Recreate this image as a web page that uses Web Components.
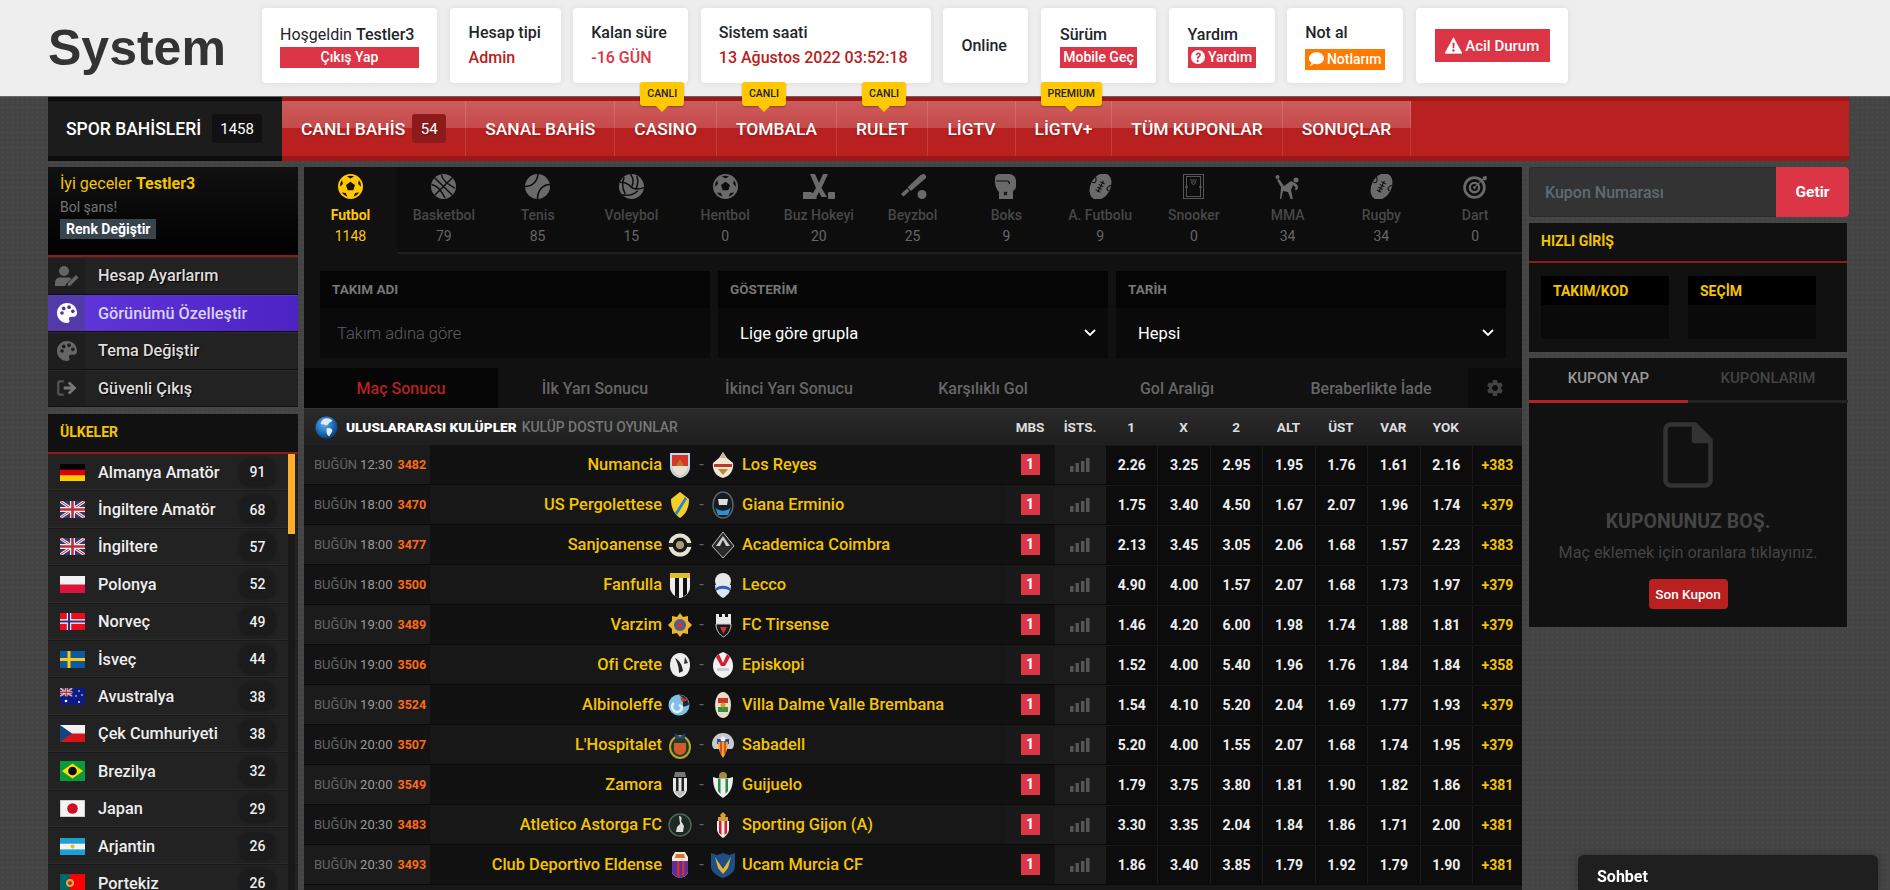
<!DOCTYPE html>
<html lang="tr"><head><meta charset="utf-8"><title>System</title>
<style>
html,body{margin:0;height:890px;overflow:hidden}
body{font-family:Roboto,"Liberation Sans",sans-serif;background-color:#444;background-image:radial-gradient(#494949 1px,transparent 1.2px);background-size:5px 5px}
</style></head><body>
<site-header></site-header>
<top-nav></top-nav>
<page-body></page-body>
<chat-bar></chat-bar>
<script>
class Base extends HTMLElement{
  constructor(){super();this.attachShadow({mode:'open'})}
  connectedCallback(){this.shadowRoot.innerHTML=`<style>:host{box-sizing:border-box}*{box-sizing:border-box}${this.css()}</style>${this.html()}`}
  css(){return ''}
  html(){return '<slot></slot>'}
}
const def=(n,c)=>customElements.define(n,c);
/* ---------- icons ---------- */
const I={
 q:`<svg width="14" height="14" viewBox="0 0 24 24"><circle cx="12" cy="12" r="12" fill="#fff"/><path d="M8 9c0-6 9-6 9-.5 0 3.500-4 3.500-4 6.500h-3c0-4.500 4-4.500 4-6.500 0-2-3-2-3 .5z" fill="#dc3545"/><circle cx="11.500" cy="18.500" r="2" fill="#dc3545"/></svg>`,
 c:`<svg width="15" height="14" viewBox="0 0 24 22"><path d="M12 0c6.600 0 12 4.300 12 9.700s-5.400 9.700-12 9.700c-1.500 0-3-.2-4.300-.7C6 20.300 3.500 22 1 22c1.300-1.300 2.700-3.500 2.900-5.400C1.500 14.900 0 12.400 0 9.700 0 4.300 5.400 0 12 0z" fill="#fff"/></svg>`,
 w:`<svg width="17" height="17" viewBox="0 0 24 22"><path d="M12 0l12 22H0z" fill="#fff" stroke="#fff" stroke-linejoin="round"/><path d="M10.500 7h3l-.4 8h-2.200z" fill="#dc3545"/><circle cx="12" cy="18" r="1.700" fill="#dc3545"/></svg>`,
 user:`<svg width="24" height="20" viewBox="0 0 24 20" fill="#666"><circle cx="9" cy="5" r="5"/><path d="M0 20v-3c0-3.500 2.500-5.500 5-5.500h8c1.500 0 2.600.4 3.500 1.200L10.700 18.500 10.500 20z"/><path d="M12.500 20l.5-3 8-8 2.500 2.500-8 8z"/></svg>`,
 pal:(f,b)=>`<svg width="20" height="20" viewBox="0 0 24 24"><path d="M12 0C5 0 0 5.300 0 12s5.300 12 12 12c3 0 3.500-2 2.700-3.500-1-2 0-4 2.500-4H20c2.500 0 4-1.800 4-4.500C24 5 19 0 12 0z" fill="${f}"/><circle cx="6" cy="12" r="2.200" fill="${b}"/><circle cx="8" cy="6.500" r="2.200" fill="${b}"/><circle cx="14.500" cy="5" r="2.200" fill="${b}"/><circle cx="19" cy="10" r="2.200" fill="${b}"/></svg>`,
 out:`<svg width="20" height="18" viewBox="0 0 24 20" fill="none" stroke="#777" stroke-width="2.600"><path d="M8 2H3.500C2 2 1.500 3 1.500 4v12c0 1 .5 2 2 2H8" stroke="#555"/><path d="M8 10h12M14 3.500l7 6.500-7 6.500" stroke-width="3.400"/></svg>`,
 gear:`<svg width="20" height="20" viewBox="0 0 24 24" fill="#444"><path d="M19.140 12.940c.04-.3.06-.61.06-.94 0-.32-.02-.64-.07-.94l2.030-1.580a.49.49 0 0 0 .12-.61l-1.920-3.320a.488.488 0 0 0-.59-.22l-2.390.96c-.5-.38-1.030-.7-1.620-.94l-.36-2.540a.484.484 0 0 0-.48-.41h-3.840c-.24 0-.43.17-.47.41l-.36 2.540c-.59.24-1.130.57-1.620.94l-2.390-.96c-.22-.08-.47 0-.59.22L2.740 8.870c-.12.21-.08.47.12.61l2.030 1.580c-.05.3-.09.63-.09.94s.02.64.07.94l-2.030 1.580a.49.49 0 0 0-.12.61l1.920 3.320c.12.22.37.29.59.22l2.390-.96c.5.38 1.030.7 1.620.94l.36 2.540c.05.24.24.41.48.41h3.840c.24 0 .44-.17.47-.41l.36-2.540c.59-.24 1.130-.56 1.620-.94l2.390.96c.22.08.47 0 .59-.22l1.920-3.320c.12-.22.07-.47-.12-.61l-2.010-1.580zM12 15.600c-1.980 0-3.600-1.620-3.600-3.600s1.620-3.600 3.600-3.600 3.600 1.620 3.600 3.600-1.620 3.600-3.600 3.600z"/></svg>`,
 chev:`<svg width="12" height="8" viewBox="0 0 12 8" fill="none" stroke="#fff" stroke-width="1.800"><path d="M1 1l5 5 5-5"/></svg>`,
 bars:`<svg width="20" height="14" viewBox="0 0 20 14" fill="#555"><rect y="8" width="3.500" height="6"/><rect x="5.500" y="5" width="3.500" height="9"/><rect x="11" y="3" width="3.500" height="11"/><rect x="16" width="3.500" height="14"/></svg>`,
 doc:`<svg width="50" height="66" viewBox="0 0 50 66" fill="none" stroke="#333" stroke-width="4.500" stroke-linejoin="round"><path d="M7 2.500h25L47.500 18v40a5.500 5.500 0 0 1-5.500 5.500H8A5.500 5.500 0 0 1 2.500 58V8A5.500 5.500 0 0 1 8 2.500z"/><path d="M31 2.500V19h16.500" fill="#333"/></svg>`,
 globe:`<svg width="23" height="23" viewBox="0 0 24 24"><defs><radialGradient id="g" cx=".4" cy=".35" r=".75"><stop offset="0" stop-color="#5fb0ee"/><stop offset=".6" stop-color="#1766b5"/><stop offset="1" stop-color="#08305e"/></radialGradient></defs><circle cx="12" cy="12" r="11.500" fill="url(#g)"/><path d="M9 3c3-1.500 8-.5 9 2-1 2-3 1-4 3s-3 2-4 1-4 0-4-1 1-4 3-5zM12 13c2-1 6 0 6 2s-2 4-3 6c-2 0-3-3-3-5z" fill="#dfeaf5"/></svg>`
};
const ball=(body,dark)=>`<svg width="25" height="25" viewBox="0 0 24 24"><circle cx="12" cy="12" r="12" fill="${body}"/><path d="M12 7.500l4.300 3.100-1.600 5H9.300l-1.600-5z" fill="${dark}"/>${[0,72,144,216,288].map(r=>`<path transform="rotate(${r} 12 12)" d="M8.600 2.400l3.400 1.900 3.400-1.900A10.200 10.200 0 0 0 8.600 2.400z" fill="${dark}"/>`).join('')}</svg>`;
const G='#6a6a6a',K='#0d0d0d';
const SP={
 futbol:ball('#ffc800','#191200'),
 basket:`<svg width="25" height="25" viewBox="0 0 24 24"><circle cx="12" cy="12" r="12" fill="${G}"/><g fill="none" stroke="${K}" stroke-width="1.400"><path d="M3.500 3.500l17 17M20.500 3.500l-17 17M10 .5c.5 4 3 8 13 13M.5 10c4 .5 8 3 13 13"/></g></svg>`,
 tenis:`<svg width="25" height="25" viewBox="0 0 24 24"><circle cx="12" cy="12" r="12" fill="${G}"/><g fill="none" stroke="${K}" stroke-width="1.500"><path d="M0 12C7 12 12 7 12.500 0M24 10c-7 0-12 6-12 14"/></g></svg>`,
 voley:`<svg width="25" height="25" viewBox="0 0 24 24"><circle cx="12" cy="12" r="12" fill="${G}"/><g fill="none" stroke="${K}" stroke-width="1.400"><path d="M11 0c3 4 3 9 1 13M17 2c2 5 1 9-1 13M12 13c4 2 8 2 12 0M3 20c5 1 11 0 15-4M1 8c3 0 8 1 11 5M5 3c-2 5-2 11 1 16"/></g></svg>`,
 hentbol:ball(G,K),
 hokey:`<svg width="32" height="25" viewBox="0 0 32 25" fill="${G}"><path d="M7 0h5l4 9 4-9h5l-6.500 14L24 23h-5.500L16 18l-2.500 5v2H0v-7h7.500l2.500 1 3-5z"/><rect x="25" y="18" width="7" height="7" rx="1"/></svg>`,
 beyzbol:`<svg width="28" height="25" viewBox="0 0 28 25" fill="${G}"><path d="M24 0c2 0 3.500 1.500 3 4L12 17l-3.500-3.500L21 1.500z"/><path d="M8 14.500l2.500 2.500-6 5.500-2.500-2.500z"/><circle cx="23" cy="20.500" r="4.500"/></svg>`,
 boks:`<svg width="22" height="25" viewBox="0 0 22 25"><path d="M5 0h9c4 0 7 3 7 7v5c0 2-1 4-3 5v8H4v-7C2 16 0 12 0 8V4c0-2 2-4 5-4z" fill="${G}"/><path d="M1 7h11c2 0 3 2 2 3M9 18l3 3M12 18l-3 3" fill="none" stroke="${K}" stroke-width="1.200"/></svg>`,
 afutbol:`<svg width="25" height="25" viewBox="0 0 24 24"><g transform="rotate(28 12 12)"><ellipse cx="12" cy="12" rx="9.500" ry="13.500" fill="${G}"/><path d="M12 6v12M9.500 8h5M9.500 11h5M9.500 14h5M9.500 17h5" fill="none" stroke="${K}" stroke-width="1"/><path d="M3 12c3.500 0 3.500-3 .5-6M21 12c-3.500 0-3.500-3-.5-6" fill="none" stroke="${K}" stroke-width="1"/></g></svg>`,
 snooker:`<svg width="21" height="25" viewBox="0 0 21 25" fill="none" stroke="#555" stroke-width="1"><rect x=".5" y=".5" width="20" height="24"/><rect x="3.500" y="2.500" width="14" height="20"/><path d="M7 6h7M8 8h5l-2.500 3z"/><circle cx="3.500" cy="13" r="1"/><circle cx="17.500" cy="13" r="1"/></svg>`,
 mma:`<svg width="25" height="25" viewBox="0 0 25 25" fill="${G}"><circle cx="2.500" cy="3" r="2"/><circle cx="21" cy="6" r="2.500"/><path d="M2 6l2-1 5 7 7-5 4 2c2 1 3 3 3 5l-1 2-2 0 .5-3-2.500-2-2 5 2 10h-2l-3-8-5-1-2 9H5l1-13z"/></svg>`,
 dart:`<svg width="25" height="25" viewBox="0 0 24 24" fill="none" stroke="${G}"><circle cx="11" cy="13" r="9.500" stroke-width="2.600"/><circle cx="11" cy="13" r="4.500" stroke-width="2.200"/><circle cx="11" cy="13" r="1.300" fill="${G}" stroke="none"/><path d="M11 13L22 2" stroke-width="1"/><path d="M19 2.500l4 0-.5 3.500-3.500 0z" fill="${G}" stroke="none"/></svg>`
};
/* flags */
const uk=`<rect width="25" height="17" fill="#2b3a70"/><path d="M0 0l25 17M25 0L0 17" stroke="#eee" stroke-width="3"/><path d="M0 0l25 17M25 0L0 17" stroke="#c8283a" stroke-width="1"/><path d="M12.500 0v17M0 8.500h25" stroke="#eee" stroke-width="5"/><path d="M12.500 0v17M0 8.500h25" stroke="#c8283a" stroke-width="2.600"/>`;
const F={
 de:`<rect width="25" height="17" fill="#ffce00"/><rect width="25" height="11.300" fill="#d00"/><rect width="25" height="5.700" fill="#000"/>`,
 uk,
 pl:`<rect width="25" height="17" fill="#dc143c"/><rect width="25" height="8.500" fill="#f2f2f2"/>`,
 no:`<rect width="25" height="17" fill="#ef0a1c"/><path d="M9 0v17M0 8.500h25" stroke="#fff" stroke-width="4.400"/><path d="M9 0v17M0 8.500h25" stroke="#2a2f80" stroke-width="2.200"/>`,
 se:`<rect width="25" height="17" fill="#0b5aa3"/><path d="M9 0v17M0 8.500h25" stroke="#fecc00" stroke-width="3"/>`,
 au:`<rect width="25" height="17" fill="#0c1a86"/><svg width="12.500" height="8.500" viewBox="0 0 25 17">${uk}</svg><g fill="#fff"><circle cx="6" cy="13" r="1.300"/><circle cx="19" cy="3" r=".8"/><circle cx="22" cy="7" r=".8"/><circle cx="16" cy="8" r=".8"/><circle cx="19" cy="14" r=".9"/></g>`,
 cz:`<rect width="25" height="17" fill="#d7141a"/><rect width="25" height="8.500" fill="#f2f2f2"/><path d="M0 0l12 8.500L0 17z" fill="#11457e"/>`,
 br:`<rect width="25" height="20" fill="#0a9a39"/><path d="M12.500 2.500L23 10 12.500 17.500 2 10z" fill="#fedf00"/><circle cx="12.500" cy="10" r="4.300" fill="#0a0a0a"/>`,
 jp:`<rect width="25" height="17" fill="#f4f4f4" stroke="#aaa"/><circle cx="12.500" cy="8.500" r="5.300" fill="#d20d22"/>`,
 ar:`<rect width="25" height="17" fill="#1b9fd4"/><rect y="5.700" width="25" height="5.700" fill="#f2f2f2"/><circle cx="12.500" cy="8.500" r="2" fill="#f6b40e"/>`,
 pt:`<rect width="25" height="18" fill="#f00"/><rect width="10" height="18" fill="#066"/><circle cx="10" cy="9" r="4" fill="#e8a33d"/><circle cx="10" cy="9" r="2" fill="#b33"/>`
};
const flag=k=>{const h=k==='br'?20:k==='pt'?18:17;return `<svg width="25" height="${h}" viewBox="0 0 25 ${h}">${F[k]}</svg>`};
/* team crests */
const cr=s=>`<svg width="24" height="28" viewBox="0 0 24 28">${s}</svg>`;
const SH='M2 2h20v14c0 6-5 10-10 11C7 26 2 22 2 16z';
const C={
 numancia:cr(`<path d="${SH}" fill="#bcd9ee"/><path d="M4 4h16v12c0 5-4 8-8 9-4-1-8-4-8-9z" fill="#d8342a"/><path d="M4 15h16v1c0 5-4 8-8 9-4-1-8-4-8-9z" fill="#e9e2d2"/><path d="M8 15l4-7 4 7z" fill="#b77b2b"/>`),
 reyes:cr(`<path d="M12 1l4 6 6 5c1 6-2 13-10 15C4 25 1 18 2 12l6-5z" fill="#efe6d4"/><path d="M3 13h18v3H3z" fill="#c2352d"/><path d="M7 18h10l-5 6z" fill="#b98a3c"/><path d="M12 1l3 6H9z" fill="#c9b48b"/>`),
 perg:cr(`<path d="M12 1l9 7c0 9-3 15-9 19C6 23 3 17 3 8z" fill="#f4cf2a"/><path d="M17 6L7 22l2 2L19 8z" fill="#2a7fd0"/>`),
 giana:cr(`<ellipse cx="12" cy="14" rx="10" ry="13" fill="#151d24" stroke="#5a6168" stroke-width="1.500"/><path d="M4 16c3 5 13 5 16 0l-3 8H7z" fill="#2f8fd0"/><path d="M7 8h10l-1 6H8z" fill="#ddd"/>`),
 sanjo:cr(`<circle cx="12" cy="14" r="11.500" fill="#e8e2d2"/><circle cx="12" cy="14" r="7.500" fill="#1e1b17"/><circle cx="12" cy="14" r="4" fill="#a89b7d"/><rect x="0" y="12" width="5" height="4" fill="#222"/><rect x="19" y="12" width="5" height="4" fill="#222"/>`),
 academica:cr(`<path d="M12 1l11 14-11 12L1 15z" fill="#2a2a2a" stroke="#bbb"/><path d="M12 5l7 10H5z" fill="#cfcfcf"/><path d="M12 9l3 6H9z" fill="#222"/>`),
 fanfulla:cr(`<path d="${SH}" fill="#eee"/><path d="M7 2h4v25l-4-2zM15 2h4v21l-4 3z" fill="#111"/><rect x="2" y="2" width="20" height="5" fill="#e0c025"/>`),
 lecco:cr(`<circle cx="12" cy="10" r="8" fill="#e8e8e8"/><path d="M4 14h16c0 7-4 11-8 13-4-2-8-6-8-13z" fill="#dce4f0"/><path d="M5 17c4-3 10-3 14 0v3c-4-3-10-3-14 0z" fill="#2f5fb0"/>`),
 varzim:cr(`<path d="M12 2l3 4 5-1 0 5 4 4-4 4 0 5-5-1-3 4-3-4-5 1 0-5-4-4 4-4 0-5 5 1z" fill="#efb526"/><circle cx="12" cy="14" r="6" fill="#3a62a8"/><circle cx="12" cy="14" r="3" fill="#d8342a"/>`),
 tirsense:cr(`<path d="M5 3h3v3h3V3h3v3h3V3h3v10H5z" fill="#e8e8e8"/><path d="M5 13h15c0 7-4 11-7.500 13C9 24 5 20 5 13z" fill="#191919" stroke="#ccc"/><path d="M9 16h7l-3.500 7z" fill="#c33"/>`),
 ofi:cr(`<path d="M12 2c6 0 10 5 10 12s-4 12-10 12S2 21 2 14 6 2 12 2z" fill="#eee"/><path d="M7 7c4 2 7 6 8 13l-4 2C11 15 9 11 7 7z" fill="#222"/><path d="M17 6l3 6-4 1z" fill="#333"/>`),
 episkopi:cr(`<path d="M12 1c6 2 10 7 10 14 0 7-5 11-10 12C7 26 2 22 2 15 2 8 6 3 12 1z" fill="#f2f2f2"/><path d="M8 3l4 9 4-9 3 3-5 9h-4L5 6z" fill="#d21e2d"/><path d="M6 17h12v3H6z" fill="#c9cdd6"/>`),
 albino:cr(`<circle cx="11" cy="14" r="10.500" fill="#7fc0e8"/><path d="M11 4c6 0 10 5 10 10l-6 2V7z" fill="#26292c"/><path d="M6 12a5 5 0 1 0 8 4l-3-2" fill="none" stroke="#eaf4fa" stroke-width="2.400"/><path d="M12 6l8 3-6 2z" fill="#d8342a"/>`),
 dalme:cr(`<ellipse cx="12" cy="14" rx="8" ry="13" fill="#e8dfc9"/><rect x="7" y="7" width="10" height="5" fill="#c9342c"/><rect x="7" y="16" width="10" height="5" fill="#3f8a45"/><circle cx="12" cy="14" r="2.500" fill="#c9a227"/>`),
 hosp:cr(`<ellipse cx="12" cy="16" rx="10" ry="11" fill="#1c3d20" stroke="#b8a532" stroke-width="2"/><path d="M6 12h12v8c-2 3-4 4-6 4s-4-1-6-4z" fill="#d3582a"/><path d="M7 2l5 4 5-4v6H7z" fill="#27407e"/>`),
 sabadell:cr(`<path d="M12 2a11 11 0 0 1 11 11c0 2-1 4-2 5H3c-1-1-2-3-2-5A11 11 0 0 1 12 2z" fill="#c9cacc"/><path d="M6 8h12v5H6z" fill="#2a4f9e"/><path d="M7 11h10c0 8-3 13-5 16-2-3-5-8-5-16z" fill="#f0a82a"/><path d="M10 11v12M14 11v12" stroke="#c33" stroke-width="1.500"/><circle cx="12" cy="8" r="2.500" fill="#eee"/>`),
 zamora:cr(`<path d="M7 1h10l1 5H6z" fill="#777"/><path d="M5 7h14v11c0 4-3 7-7 9-4-2-7-5-7-9z" fill="#e8e8e8"/><path d="M8 7h2.500v13H8zM13.500 7H16v13h-2.500z" fill="#222"/><path d="M6 20h12l-6 6z" fill="#bbb"/>`),
 guijuelo:cr(`<circle cx="12" cy="5" r="4" fill="#a08a40"/><path d="M2 6c6 2 14 2 20 0 0 9-2 16-10 21C4 22 2 15 2 6z" fill="#eee"/><path d="M7 8h2.500v15L7 20zM14.500 8H17v12l-2.500 3z" fill="#22894a"/>`),
 astorga:cr(`<circle cx="12" cy="14" r="11" fill="#1b2a22" stroke="#4e6656" stroke-width="1.500"/><path d="M11 5c3 0 3 3 2 5l3 5-1 6H8l1-5 3-3z" fill="#ddd"/>`),
 gijon:cr(`<path d="M12 1l3 3-1 2h3v4H7V6h3L9 4z" fill="#d8a22a"/><path d="M6 10h12v8c0 4-3 7-6 9-3-2-6-5-6-9z" fill="#eee"/><path d="M8 10h2.500v14L8 22zM13.500 10H16v12l-2.500 2z" fill="#d21e2d"/>`),
 eldense:cr(`<path d="M7 1h10l3 5v14c0 4-4 6-8 7-4-1-8-3-8-7V6z" fill="#f0e8dc"/><path d="M4 10h16v10c0 4-4 6-8 7-4-1-8-3-8-7z" fill="#5a2fa0"/><path d="M9 10h2.500v16L9 25zM14 10h2.500v14L14 26z" fill="#d0302c"/><path d="M8 3h8l1 4H7z" fill="#d8742a"/>`),
 ucam:cr(`<path d="M0 2l6 2 6-2 6 2 6-2v13c0 6-6 10-12 12C6 25 0 21 0 15z" fill="#1d4f86"/><path d="M4 6l8 12 8-12-3 11-5 6-5-6z" fill="#e4b534"/>`)
};
/* ---------- header ---------- */
def('info-card',class extends Base{
  css(){return `:host{display:flex;flex-direction:column;justify-content:center;height:75px;padding:0 18px;background:#fff;border-radius:4px;box-shadow:0 0 6px rgba(0,0,0,.08);flex:none;color:#212529;font-size:16px;line-height:22px;font-weight:500}`}
});
def('card-label',class extends Base{css(){return `:host{display:block;font-size:16px;line-height:22px;font-weight:500;color:#212529;white-space:nowrap}`}});
def('card-value',class extends Base{css(){return `:host{display:block;margin-top:3px;font-size:16px;line-height:22px;font-weight:500;color:#b92020;white-space:nowrap}`}});
def('red-btn',class extends Base{css(){return `:host{display:flex;align-items:center;justify-content:center;gap:3px;height:21px;margin-top:1px;background:var(--bg,#dc3545);color:#fff;font-size:14px;font-weight:500;white-space:nowrap}`}});
def('site-header',class extends Base{
  css(){return `:host{display:flex;gap:12.600px;height:97px;padding:8px 0 0 262px;background:#eee;border-bottom:1px solid #666;position:relative;align-items:flex-start}
  .logo{position:absolute;left:48px;top:19px;font:700 50px/58px "Liberation Sans",Arial,sans-serif;color:#333}
  .hi{font-weight:400}.hi b{font-weight:500}
  .em{height:33px;width:115px;background:#dc3545;color:#fff;display:flex;align-items:center;justify-content:center;gap:3px;font-size:15px;font-weight:500}`}
  html(){return `<div class="logo">System</div>
  <info-card style="width:175px"><card-label><span class="hi">Hoşgeldin <b>Testler3</b></span></card-label><red-btn>Çıkış Yap</red-btn></info-card>
  <info-card style="width:111px;padding:0 19px"><card-label>Hesap tipi</card-label><card-value>Admin</card-value></info-card>
  <info-card style="width:115px"><card-label>Kalan süre</card-label><card-value style="color:#dc3545">-16 GÜN</card-value></info-card>
  <info-card style="width:230px"><card-label>Sistem saati</card-label><card-value>13 Ağustos 2022 03:52:18</card-value></info-card>
  <info-card style="width:85px"><card-label>Online</card-label></info-card>
  <info-card style="width:115px;padding:0 19px"><card-label>Sürüm</card-label><red-btn>Mobile Geç</red-btn></info-card>
  <info-card style="width:106px;padding:0 19px"><card-label>Yardım</card-label><red-btn>${I.q} Yardım</red-btn></info-card>
  <info-card style="width:116px;padding:0 18px"><card-label>Not al</card-label><red-btn style="--bg:#ff7b00;margin-top:5px">${I.c} Notlarım</red-btn></info-card>
  <info-card style="width:152px;padding:0 19px;align-items:flex-start"><div class="em">${I.w} Acil Durum</div></info-card>`}
});
/* ---------- nav ---------- */
def('nav-item',class extends Base{
  css(){return `:host{display:flex;align-items:center;gap:7px;height:55px;padding:0 19px;position:relative;color:#fff;font-size:17.400px;font-weight:500;white-space:nowrap;text-shadow:0 1px 2px rgba(0,0,0,.25);
    background:linear-gradient(#cd5c5c 0,#c64a4a 49%,#b92020 50%,#b92020 100%);border-right:1px solid rgba(255,255,255,.13)}
   .n{min-width:34px;height:29px;background:#8c1c1c;border-radius:3px;display:flex;align-items:center;justify-content:center;font-size:15px;font-weight:400}
   .tag{position:absolute;left:25px;top:-19px;height:24px;padding:0 7px;background:#ffc800;border-radius:3px;color:#222;font-size:10.500px;font-weight:500;line-height:24px;text-shadow:none;box-shadow:0 1px 2px rgba(0,0,0,.3)}
   .tag:after{content:"";position:absolute;left:50%;margin-left:-6px;top:24px;border:6px solid transparent;border-top-color:#ffc800;border-bottom:0}`}
  html(){const t=this.getAttribute('tag'),n=this.getAttribute('n');return `<slot></slot>${n?`<span class="n">${n}</span>`:''}${t?`<span class="tag">${t}</span>`:''}`}
});
def('top-nav',class extends Base{
  css(){return `:host{display:flex;height:64px;margin:0 41px 0 48px}
  .sp{width:234px;flex:none;background:#1c1c1c;border-top:4px solid #0c0c0c;border-bottom:5px solid #0c0c0c;display:flex;align-items:center;padding-left:18px;gap:11px;color:#fff;font-size:17.500px;font-weight:500;white-space:nowrap}
  .sp span{width:50px;height:29px;background:#111;border-radius:3px;display:flex;align-items:center;justify-content:center;font-size:15px;font-weight:400}
  .red{flex:1;display:flex;background:#b92020;border-top:4px solid #9c1818;border-bottom:5px solid #9c1818}`}
  html(){return `<div class="sp">SPOR BAHİSLERİ <span>1458</span></div><div class="red">
  <nav-item n="54">CANLI BAHİS</nav-item><nav-item>SANAL BAHİS</nav-item><nav-item tag="CANLI">CASINO</nav-item><nav-item tag="CANLI">TOMBALA</nav-item><nav-item tag="CANLI">RULET</nav-item><nav-item>LİGTV</nav-item><nav-item tag="PREMIUM">LİGTV+</nav-item><nav-item>TÜM KUPONLAR</nav-item><nav-item>SONUÇLAR</nav-item></div>`}
});
/* ---------- left ---------- */
def('panel-head',class extends Base{css(){return `:host{display:flex;align-items:center;height:40px;padding:0 12px 2px;background:#111;border-bottom:2px solid #8f1a1a;color:#f5c400;font-size:14px;font-weight:700}`}});
def('user-menu',class extends Base{
  css(){return `:host{display:block;background:#222}
  .g{height:90px;padding:7px 12px 0;background:linear-gradient(#111,#000);border-bottom:2px solid #8f1a1a}
  .h{font-size:16px;line-height:20px;color:#f5c400}.h b{font-weight:700}
  .s{font-size:14px;line-height:17px;color:#777;margin-top:5px}
  .b{display:inline-block;margin-top:3px;height:20px;line-height:20px;padding:0 6px;background:#37444c;color:#fff;font-size:14px;font-weight:700}
  .r{display:flex;height:37.500px;align-items:center;font-size:16.300px;font-weight:500;color:#ddd;border-bottom:1px solid #0f0f0f;border-top:1px solid #2a2a2a;text-shadow:1px 1px 1px #000}
  .i{width:37px;height:100%;display:flex;align-items:center;justify-content:center;background:#1e1e1e;margin-right:13px}
  .on{background:linear-gradient(90deg,#6038db,#4c23c3);color:#d9d2f5;text-shadow:none;border-top-color:#5a35d5}.on .i{background:#523aa8}`}
  html(){return `<div class="g"><div class="h">İyi geceler <b>Testler3</b></div><div class="s">Bol şans!</div><span class="b">Renk Değiştir</span></div>
  <div class="r"><div class="i">${I.user}</div>Hesap Ayarlarım</div>
  <div class="r on"><div class="i">${I.pal('#fff','#4d35a0')}</div>Görünümü Özelleştir</div>
  <div class="r"><div class="i">${I.pal('#666','#1e1e1e')}</div>Tema Değiştir</div>
  <div class="r"><div class="i">${I.out}</div>Güvenli Çıkış</div>`}
});
def('country-list',class extends Base{
  css(){return `:host{display:block;position:relative;background:#222}
  .r{display:flex;align-items:center;height:37.400px;padding-left:12px;font-size:16.300px;font-weight:500;color:#eee;border-bottom:1px solid #1a1a1a;box-shadow:inset 0 -1px 0 #2a2a2a;white-space:nowrap}
  .f{width:25px;display:flex;margin-right:13px}
  .t{width:142px}
  .c{width:35px;height:27px;border-radius:9px;background:#1b1b1b;box-shadow:0 0 4px #161616;display:flex;align-items:center;justify-content:center;font-size:14px;font-weight:500}
  .track{position:absolute;left:240px;top:0;bottom:0;width:7px;background:#181818}
  .thumb{position:absolute;left:240px;top:0;width:7px;height:80px;background:#ffae2b}`}
  html(){const d=[['de','Almanya Amatör',91],['uk','İngiltere Amatör',68],['uk','İngiltere',57],['pl','Polonya',52],['no','Norveç',49],['se','İsveç',44],['au','Avustralya',38],['cz','Çek Cumhuriyeti',38],['br','Brezilya',32],['jp','Japan',29],['ar','Arjantin',26],['pt','Portekiz',26]];
   return d.map(x=>`<div class="r"><div class="f">${flag(x[0])}</div><div class="t">${x[1]}</div><div class="c">${x[2]}</div></div>`).join('')+`<div class="track"></div><div class="thumb"></div>`}
});
/* ---------- sports ---------- */
def('sports-bar',class extends Base{
  css(){return `:host{display:grid;grid-template-columns:93px repeat(12,1fr);height:87px;background:#0d0d0d}
  .t{height:87px;text-align:center;padding-top:7px;border-bottom:2px solid #1e1e1e;font-size:14px;color:#666}
  .i{height:25px;display:flex;justify-content:center}
  .n{margin-top:8px;line-height:17px;font-weight:500;color:#474747;white-space:nowrap}.c{margin-top:4px;line-height:17px}
  .on{background:#111;border-bottom-color:#111;color:#ffc800}.on .n{color:#ffc800;font-weight:700}`}
  html(){const d=[['futbol','Futbol',1148],['basket','Basketbol',79],['tenis','Tenis',85],['voley','Voleybol',15],['hentbol','Hentbol',0],['hokey','Buz Hokeyi',20],['beyzbol','Beyzbol',25],['boks','Boks',9],['afutbol','A. Futbolu',9],['snooker','Snooker',0],['mma','MMA',34],['afutbol','Rugby',34],['dart','Dart',0]];
   return d.map((x,i)=>`<div class="t${i?'':' on'}"><div class="i">${SP[x[0]]}</div><div class="n">${x[1]}</div><div class="c">${x[2]}</div></div>`).join('')}
});
def('filter-box',class extends Base{
  css(){return `:host{display:block;background:#0a0a0a}
  .h{height:37px;line-height:37px;padding-left:12px;background:#050505;color:#777;font-size:13.500px;font-weight:700}
  .v{height:50px;display:flex;align-items:center;justify-content:space-between;padding:0 12px 0 22px;color:#fff;font-size:16.500px}
  .p{color:#5a5f63;font-weight:300}`}
  html(){const ph=this.getAttribute('ph');return `<div class="h">${this.getAttribute('label')}</div><div class="v" ${ph?'style="padding-left:17px"':''}>${ph?`<span class="p">${ph}</span>`:`<span>${this.getAttribute('val')}</span>${I.chev}`}</div>`}
});
def('filter-row',class extends Base{css(){return `:host{display:grid;grid-template-columns:repeat(3,390px);gap:8px;padding:17px 16px 10px;background:#111}`}});
def('market-tabs',class extends Base{
  css(){return `:host{display:grid;grid-template-columns:repeat(6,194px) 1fr;height:40px;background:#111}
  div{display:flex;align-items:center;justify-content:center;font-size:16px;font-weight:500;color:#666}
  .on{background:#060606;color:#b92020}.g{background:#0b0b0b}`}
  html(){return `<div class="on">Maç Sonucu</div><div>İlk Yarı Sonucu</div><div>İkinci Yarı Sonucu</div><div>Karşılıklı Gol</div><div>Gol Aralığı</div><div>Beraberlikte İade</div><div class="g">${I.gear}</div>`}
});
const COLS='grid-template-columns:126px 575px 50px 50px repeat(7,1fr) 50px';
def('match-head',class extends Base{
  css(){return `:host{display:grid;${COLS};height:37px;align-items:center;background:linear-gradient(#2a2a2a,#1f1f1f);border-top:1px solid #333;font-size:13.500px;font-weight:700;color:#ddd;text-align:center}
  .l{grid-column:1/3;display:flex;align-items:center;padding-left:11px;gap:8px;white-space:nowrap}.l b{color:#fff;margin-right:-3px;font-size:13.700px}.l span{color:#777;font-weight:500;font-size:13.900px}`}
  html(){return `<div class="l">${I.globe}<b>ULUSLARARASI KULÜPLER</b> <span>KULÜP DOSTU OYUNLAR</span></div>`+['MBS','İSTS.','1','X','2','ALT','ÜST','VAR','YOK',''].map(x=>`<div>${x}</div>`).join('')}
});
def('match-row',class extends Base{
  css(){return `:host{display:grid;${COLS};height:40px;align-items:stretch;background:var(--r);border-bottom:1px solid #0a0a0a;color:#eee;--r:#111;--t:#1b1b1b;--m:#111}
  :host([alt]){--r:#171717;--t:#131313;--m:#191919}
  .time{background:var(--t);display:flex;align-items:center;padding-left:10px;font-size:13px;color:#999;white-space:nowrap}
  .time i{font-style:normal;color:#666;margin-right:3px}.time b{margin-left:5px;color:#ff6a13;font-weight:700;font-size:12.500px}
  .tm{display:grid;grid-template-columns:232px 6px 24px 19px 24px 7px 263px;align-items:center;font-size:16.400px;font-weight:500;color:#f5c400;white-space:nowrap}
  .h{text-align:right}.d{text-align:center;color:#666;font-weight:400}svg{display:block}
  .mbs,.st{display:flex;align-items:center;justify-content:center}
  .mbs{background:var(--m)}.mbs span{width:19px;height:21px;background:#dc3545;color:#fff;font-size:14px;font-weight:700;text-align:center;line-height:21px}
  .st{background:#1b1b1b}
  .o{display:flex;align-items:center;justify-content:center;background:#0c0c0c;border-left:1px solid #1b1b1b;border-top:1px solid #171717;font-size:14px;font-weight:700;color:#eee}
  .p{color:#f5c400}`}
  html(){if(!this.dataset.h)return '';const d=this.dataset;return `<div class="time"><i>BUĞÜN</i> ${d.t}<b>${d.c}</b></div>
  <div class="tm"><span class="h">${d.h}</span><span></span>${C[d.hc]}<span class="d">-</span>${C[d.ac]}<span></span><span>${d.a}</span></div>
  <div class="mbs"><span>1</span></div><div class="st">${I.bars}</div>`+d.o.split(' ').map((x,i)=>`<div class="o${i==7?' p':''}">${x}</div>`).join('')}
});
def('match-list',class extends Base{
  css(){return `:host{display:block;background:#111}`}
  html(){const R=[['12:30',3482,'Numancia','numancia','Los Reyes','reyes','2.26 3.25 2.95 1.95 1.76 1.61 2.16 +383'],['18:00',3470,'US Pergolettese','perg','Giana Erminio','giana','1.75 3.40 4.50 1.67 2.07 1.96 1.74 +379'],['18:00',3477,'Sanjoanense','sanjo','Academica Coimbra','academica','2.13 3.45 3.05 2.06 1.68 1.57 2.23 +383'],['18:00',3500,'Fanfulla','fanfulla','Lecco','lecco','4.90 4.00 1.57 2.07 1.68 1.73 1.97 +379'],['19:00',3489,'Varzim','varzim','FC Tirsense','tirsense','1.46 4.20 6.00 1.98 1.74 1.88 1.81 +379'],['19:00',3506,'Ofi Crete','ofi','Episkopi','episkopi','1.52 4.00 5.40 1.96 1.76 1.84 1.84 +358'],['19:00',3524,'Albinoleffe','albino','Villa Dalme Valle Brembana','dalme','1.54 4.10 5.20 2.04 1.69 1.77 1.93 +379'],['20:00',3507,"L'Hospitalet",'hosp','Sabadell','sabadell','5.20 4.00 1.55 2.07 1.68 1.74 1.95 +379'],['20:00',3549,'Zamora','zamora','Guijuelo','guijuelo','1.79 3.75 3.80 1.81 1.90 1.82 1.86 +381'],['20:30',3483,'Atletico Astorga FC','astorga','Sporting Gijon (A)','gijon','3.30 3.35 2.04 1.84 1.86 1.71 2.00 +381'],['20:30',3493,'Club Deportivo Eldense','eldense','Ucam Murcia CF','ucam','1.86 3.40 3.85 1.79 1.92 1.79 1.90 +381']];
  return `<match-head></match-head>`+R.map((r,i)=>`<match-row ${i%2?'alt':''} data-t="${r[0]}" data-c="${r[1]}" data-h="${r[2]}" data-hc="${r[3]}" data-a="${r[4]}" data-ac="${r[5]}" data-o="${r[6]}"></match-row>`).join('')+`<match-row alt></match-row>`}
});
/* ---------- right ---------- */
def('coupon-search',class extends Base{
  css(){return `:host{display:flex;height:50px;width:320px;border-radius:4px;overflow:hidden;background:#333;box-shadow:inset 0 0 0 1px #2a2a2a}
  .i{flex:1;display:flex;align-items:center;padding-left:16px;font-size:16px;font-weight:500;color:#5f6b73}
  .b{width:73px;background:#dc3545;color:#fff;font-size:15.500px;font-weight:700;display:flex;align-items:center;justify-content:center}`}
  html(){return `<div class="i">Kupon Numarası</div><div class="b">Getir</div>`}
});
def('quick-entry',class extends Base{
  css(){return `:host{display:block;background:#111}
  .b{display:grid;grid-template-columns:128px 128px;gap:19px;padding:13px 12px}
  .c{height:63px;background:#0a0a0a}.c div{height:29px;background:#000;padding:0 12px;display:flex;align-items:center;color:#f5c400;font-size:14px;font-weight:700}`}
  html(){return `<panel-head style="height:40px">HIZLI GİRİŞ</panel-head><div class="b"><div class="c"><div>TAKIM/KOD</div></div><div class="c"><div>SEÇİM</div></div></div>`}
});
def('coupon-box',class extends Base{
  css(){return `:host{display:block;background:#111}
  .t{display:grid;grid-template-columns:159px 160px;height:45px}
  .t div{display:flex;align-items:center;justify-content:center;height:45px;padding-bottom:3px;border-bottom:3px solid #222;font-size:15px;font-weight:500;color:#444}
  .t .on{color:#999;border-bottom-color:#b92020}
  .m{height:224px;display:flex;flex-direction:column;align-items:center;padding-top:19px}
  h3{margin:23px 0 0;font-size:19.500px;line-height:22px;font-weight:700;color:#444}
  p{margin:10px 0 0;font-size:16.200px;line-height:20px;color:#444}
  .b{margin-top:16px;width:79px;height:30px;border-radius:4px;background:#b92020;color:#fff;font-size:13.500px;font-weight:500;display:flex;align-items:center;justify-content:center}`}
  html(){return `<div class="t"><div class="on">KUPON YAP</div><div>KUPONLARIM</div></div><div class="m">${I.doc}<h3>KUPONUNUZ BOŞ.</h3><p>Maç eklemek için oranlara tıklayınız.</p><div class="b">Son Kupon</div></div>`}
});
def('chat-bar',class extends Base{
  css(){return `:host{position:fixed;right:12px;bottom:0;width:300px;height:35px;background:#1f1f1f;border-radius:6px 6px 0 0;box-shadow:0 0 8px rgba(0,0,0,.3);color:#fff;font-size:16px;font-weight:700;display:flex;align-items:center;padding:7px 0 0 19px}`}
  html(){return 'Sohbet'}
});
def('page-body',class extends Base{
  css(){return `:host{display:grid;grid-template-columns:250px 1218px 319px;gap:0 6px;margin:6px 41px 0 48px;align-items:start}
  .c{display:flex;flex-direction:column}.r{gap:6px;margin-left:1px}
  user-menu{margin-bottom:7px}`}
  html(){return `<div class="c"><user-menu></user-menu><panel-head>ÜLKELER</panel-head><country-list></country-list></div>
  <div class="c"><sports-bar></sports-bar><filter-row><filter-box label="TAKIM ADI" ph="Takım adına göre"></filter-box><filter-box label="GÖSTERİM" val="Lige göre grupla"></filter-box><filter-box label="TARİH" val="Hepsi"></filter-box></filter-row><market-tabs></market-tabs><match-list></match-list></div>
  <div class="c r"><coupon-search></coupon-search><quick-entry></quick-entry><coupon-box></coupon-box></div>`}
});
</script>
</body></html>
